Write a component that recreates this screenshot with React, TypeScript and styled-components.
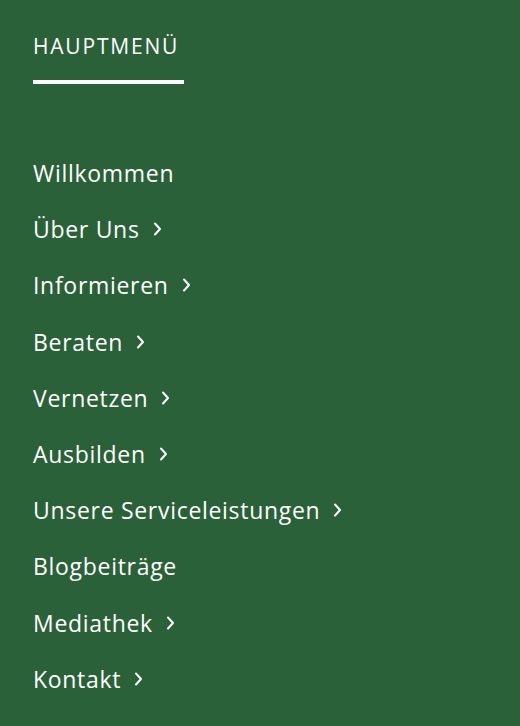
import React from "react";
import styled, { createGlobalStyle } from "styled-components";

const Global = createGlobalStyle`
  html, body { margin: 0; padding: 0; background: #2a6139; }
  body { font-family: "Open Sans", "Liberation Sans", sans-serif; }
`;

const Panel = styled.nav`
  width: 520px;
  height: 726px;
  background: #2a6139;
  color: #ffffff;
  padding: 33px 0 0 33px;
  box-sizing: border-box;
`;

const Title = styled.h2`
  margin: 0;
  display: inline-block;
  font-size: 21px;
  font-weight: 400;
  letter-spacing: 1.8px;
  line-height: 27px;
  padding-bottom: 20px;
  border-bottom: 4px solid #ffffff;
  width: 151px;
  white-space: nowrap;
`;

const List = styled.ul`
  list-style: none;
  margin: 61px 0 0 0;
  padding: 0;
  display: flex;
  flex-direction: column;
`;

const Item = styled.li`
  height: 56.2px;
  display: flex;
  align-items: center;
  gap: 13px;
  font-size: 23px;
  letter-spacing: 0.7px;
`;

const Chevron = () => (
  <svg width="9" height="14" viewBox="0 0 9 14" fill="none">
    <path d="M2 1.5 L7 7 L2 12.5" stroke="#fff" strokeWidth="2" strokeLinecap="round" strokeLinejoin="round" />
  </svg>
);

const items: [string, boolean][] = [
  ["Willkommen", false],
  ["Über Uns", true],
  ["Informieren", true],
  ["Beraten", true],
  ["Vernetzen", true],
  ["Ausbilden", true],
  ["Unsere Serviceleistungen", true],
  ["Blogbeiträge", false],
  ["Mediathek", true],
  ["Kontakt", true],
];

export default function App() {
  return (
    <>
      <Global />
      <Panel>
        <Title>HAUPTMENÜ</Title>
        <List>
          {items.map(([label, sub]) => (
            <Item key={label}>
              <span>{label}</span>
              {sub && <Chevron />}
            </Item>
          ))}
        </List>
      </Panel>
    </>
  );
}
